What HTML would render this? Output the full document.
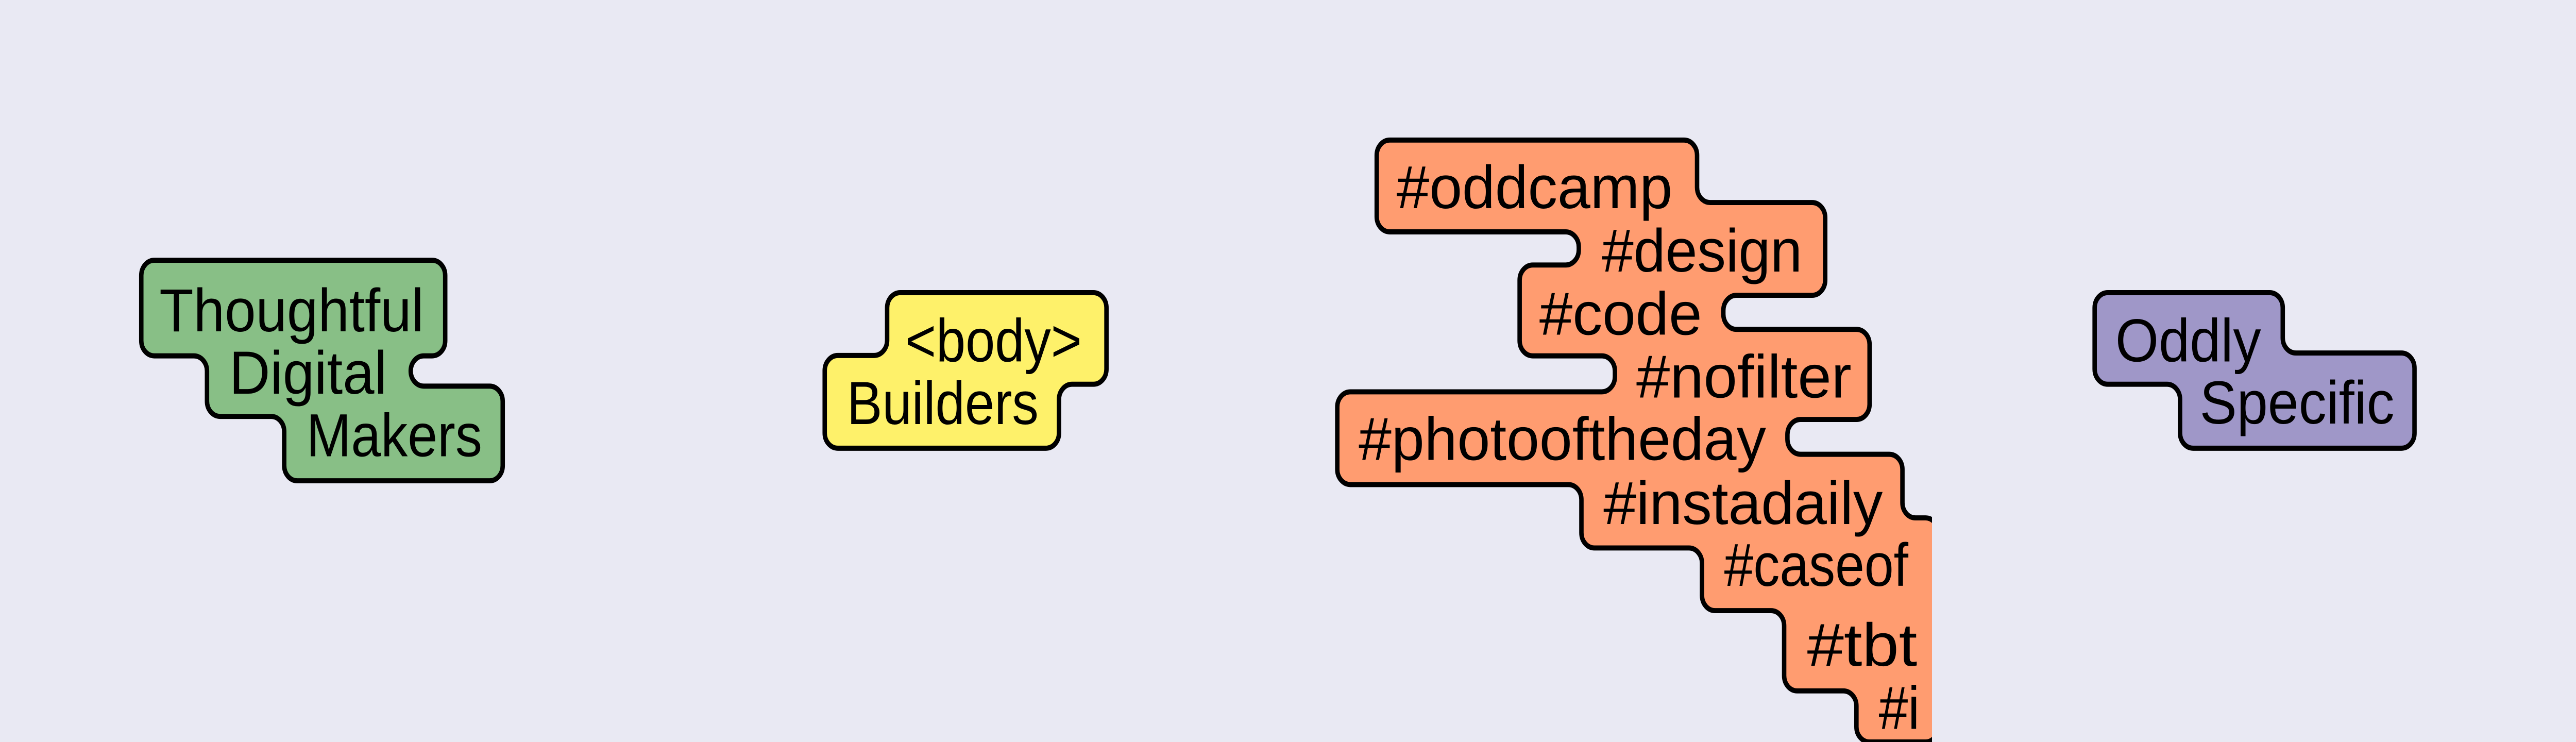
<!DOCTYPE html>
<html><head><meta charset="utf-8"><style>
html,body{margin:0;padding:0;background:#e9e9f3;overflow:hidden}
svg{display:block;position:fixed;left:0;top:0;width:100vw;height:100vh}
text{font-family:"Liberation Sans",sans-serif;font-size:32px;fill:#000}
</style></head><body>
<svg id="s" viewBox="0 0 1568 392" preserveAspectRatio="none" xmlns="http://www.w3.org/2000/svg">
<rect width="1568" height="392" fill="#e9e9f3"/>
<defs><clipPath id="c"><rect x="0" y="0" width="1176" height="392"/></clipPath></defs>
<g id="fb">
<g stroke="#000" stroke-width="5.4" fill="#000">
<rect x="86" y="137.5" width="185" height="50.5" rx="8"/>
<rect x="126" y="160" width="124" height="60" rx="8"/>
<rect x="173" y="204" width="133" height="50" rx="8"/>
<rect x="540" y="154.6" width="133.5" height="48.4" rx="8"/>
<rect x="502" y="187.8" width="142.6" height="49" rx="8"/>
<rect x="1275" y="154.6" width="114.5" height="48.4" rx="8"/>
<rect x="1327" y="186.5" width="142.7" height="50.3" rx="8"/>
</g>
<g fill="#88bf86">
<rect x="86" y="137.5" width="185" height="50.5" rx="8"/>
<rect x="126" y="160" width="124" height="60" rx="8"/>
<rect x="173" y="204" width="133" height="50" rx="8"/>
</g>
<g fill="#fef16a">
<rect x="540" y="154.6" width="133.5" height="48.4" rx="8"/>
<rect x="502" y="187.8" width="142.6" height="49" rx="8"/>
</g>
<g fill="#9f97c8">
<rect x="1275" y="154.6" width="114.5" height="48.4" rx="8"/>
<rect x="1327" y="186.5" width="142.7" height="50.3" rx="8"/>
</g>
<g clip-path="url(#c)">
<g stroke="#000" stroke-width="5.4" fill="#000">
<rect x="838" y="74" width="195" height="48.5" rx="8"/>
<rect x="961" y="107" width="150" height="49" rx="8"/>
<rect x="925" y="140" width="124" height="48" rx="8"/>
<rect x="983" y="174" width="155" height="47.6" rx="8"/>
<rect x="814" y="207" width="274" height="49" rx="8"/>
<rect x="962.6" y="240" width="195.4" height="49.5" rx="8"/>
<rect x="1036" y="273.6" width="140" height="49" rx="8"/>
<rect x="1086" y="300" width="90" height="65" rx="8"/>
<rect x="1130" y="340" width="46" height="52"/>
</g>
<g fill="#ff9c70">
<rect x="838" y="74" width="195" height="48.5" rx="8"/>
<rect x="961" y="107" width="150" height="49" rx="8"/>
<rect x="925" y="140" width="124" height="48" rx="8"/>
<rect x="983" y="174" width="155" height="47.6" rx="8"/>
<rect x="814" y="207" width="274" height="49" rx="8"/>
<rect x="962.6" y="240" width="195.4" height="49.5" rx="8"/>
<rect x="1036" y="273.6" width="140" height="49" rx="8"/>
<rect x="1086" y="300" width="90" height="65" rx="8"/>
<rect x="1130" y="340" width="46" height="52"/>
</g>
</g>
</g>
<g id="shapes" stroke="#000" stroke-width="2.7">
<path id="pg" fill="#88bf86" d=""/>
<path id="py" fill="#fef16a" d=""/>
<path id="pp" fill="#9f97c8" d=""/>
<path id="po" fill="#ff9c70" d="" clip-path="url(#c)"/>
</g>
<text x="97" y="175" textLength="161" lengthAdjust="spacingAndGlyphs">Thoughtful</text>
<text x="139.5" y="208" textLength="96" lengthAdjust="spacingAndGlyphs">Digital</text>
<text x="186.5" y="241" textLength="107" lengthAdjust="spacingAndGlyphs">Makers</text>
<text x="551" y="191" textLength="107.5" lengthAdjust="spacingAndGlyphs">&lt;body&gt;</text>
<text x="515.5" y="224" textLength="116.7" lengthAdjust="spacingAndGlyphs">Builders</text>
<text x="1287.6" y="191" textLength="88.7" lengthAdjust="spacingAndGlyphs">Oddly</text>
<text x="1339" y="223.7" textLength="118.5" lengthAdjust="spacingAndGlyphs">Specific</text>
<g clip-path="url(#c)">
<text x="850" y="110" textLength="168" lengthAdjust="spacingAndGlyphs">#oddcamp</text>
<text x="975" y="143.5" textLength="122" lengthAdjust="spacingAndGlyphs">#design</text>
<text x="937" y="176.8" textLength="99" lengthAdjust="spacingAndGlyphs">#code</text>
<text x="996" y="210" textLength="131" lengthAdjust="spacingAndGlyphs">#nofilter</text>
<text x="827" y="243" textLength="248" lengthAdjust="spacingAndGlyphs">#photooftheday</text>
<text x="976" y="276.8" textLength="170" lengthAdjust="spacingAndGlyphs">#instadaily</text>
<text x="1049.5" y="309.5">#caseof</text>
<text x="1100" y="351.7" textLength="67" lengthAdjust="spacingAndGlyphs">#tbt</text>
<text x="1143.6" y="385">#i</text>
</g>
</svg>
<script>
(function(){
function rp(pts,r){var d='',n=pts.length;for(var i=0;i<n;i++){var p=pts[i],a=pts[(i-1+n)%n],b=pts[(i+1)%n];
var l1=Math.hypot(p[0]-a[0],p[1]-a[1]),l2=Math.hypot(b[0]-p[0],b[1]-p[1]);var rr=Math.min(r,l1/2,l2/2);
var u1=[(p[0]-a[0])/l1,(p[1]-a[1])/l1],u2=[(b[0]-p[0])/l2,(b[1]-p[1])/l2];
var s=[p[0]-u1[0]*rr,p[1]-u1[1]*rr],e=[p[0]+u2[0]*rr,p[1]+u2[1]*rr];var cr=u1[0]*u2[1]-u1[1]*u2[0];
d+=(i?'L':'M')+s[0]+' '+s[1]+'A'+rr+' '+rr+' 0 0 '+(cr>0?1:0)+' '+e[0]+' '+e[1];}return d+'Z';}
var G=[[86,137.5],[271,137.5],[271,188],[250,188],[250,204],[306,204],[306,254],[173,254],[173,220],[126,220],[126,188],[86,188]];
var Y=[[540,154.6],[673.5,154.6],[673.5,203],[644.6,203],[644.6,236.8],[502,236.8],[502,187.8],[540,187.8]];
var P=[[1275,154.6],[1389.5,154.6],[1389.5,186.5],[1469.7,186.5],[1469.7,236.8],[1327,236.8],[1327,203],[1275,203]];
var O=[[838,74],[1033,74],[1033,107],[1111,107],[1111,156],[1049,156],[1049,174],[1138,174],[1138,221.6],[1088,221.6],[1088,240],[1158,240],[1158,273.6],[1180,273.6],[1180,392],[1130,392],[1130,365],[1086,365],[1086,322.6],[1036,322.6],[1036,289.5],[962.6,289.5],[962.6,256],[814,256],[814,207],[983,207],[983,188],[925,188],[925,140],[961,140],[961,122.5],[838,122.5]];
document.getElementById('pg').setAttribute('d',rp(G,8));
document.getElementById('py').setAttribute('d',rp(Y,8));
document.getElementById('pp').setAttribute('d',rp(P,8));
document.getElementById('po').setAttribute('d',rp(O,8));
var fb=document.getElementById('fb');fb.parentNode.removeChild(fb);
})();
</script>
</body></html>
